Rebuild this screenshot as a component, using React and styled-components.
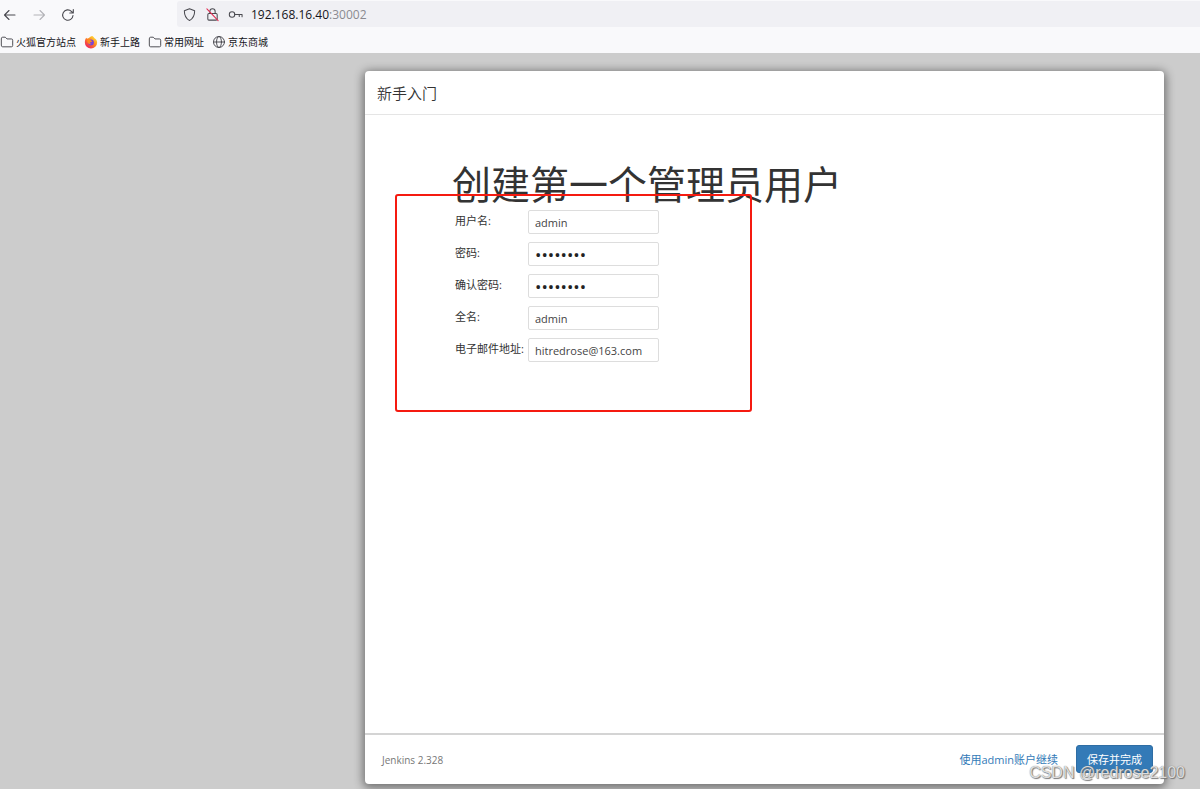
import React from 'react';
import styled, { createGlobalStyle } from 'styled-components';

const Global = createGlobalStyle`
  * { box-sizing: border-box; }
  body {
    margin: 0;
    background: #ccc;
    color: #333;
    font-family: "Open Sans", "Noto Sans CJK SC", sans-serif;
    font-size: 11px;
  }
  button, input { font-family: inherit; }
`;

const Page = styled.div`
  min-height: 100vh;
  display: flex;
  flex-direction: column;
  position: relative;
  overflow: hidden;
`;

const Browser = styled.header`
  background: #f9f9fb;
  height: 53px;
  color: #15141a;
`;

const Toolbar = styled.div`
  display: flex;
  align-items: center;
  height: 30px;
  padding-left: 2px;
`;

const NavButton = styled.button`
  display: flex;
  border: 0;
  padding: 0;
  margin-right: 13px;
  background: none;
  color: ${(p) => (p.disabled ? '#b4b4b8' : '#4a4a50')};
`;

const AddressBar = styled.div`
  display: flex;
  align-items: center;
  flex: 1;
  gap: 8px;
  height: 26px;
  margin: 0 0 2px 88px;
  padding-left: 5px;
  border-radius: 3px 0 0 3px;
  background: #f0f0f4;
  color: #4a4a50;
`;

const Address = styled.span`
  font-size: 12px;
  line-height: 16px;
  padding-top: 1px;
  color: #15141a;
  span { color: #8a8a90; }
`;

const Bookmarks = styled.nav`
  display: flex;
  align-items: center;
  gap: 8px;
  height: 23px;
`;

const Bookmark = styled.a`
  display: flex;
  align-items: center;
  gap: 2px;
  color: #15141a;
  font-size: 10px;
  line-height: 14px;
  text-decoration: none;
  white-space: nowrap;
  svg { color: #4a4a50; }
`;

const Stage = styled.main`
  flex: 1;
  display: flex;
  padding: 18px 36px 5px 365px;
`;

const Modal = styled.section`
  flex: 1;
  display: flex;
  flex-direction: column;
  min-width: 0;
  border-radius: 4px;
  background: #fff;
  box-shadow: 0 2px 10px 2px rgba(0, 0, 0, 0.45);
`;

const ModalHeader = styled.div`
  height: 44px;
  padding: 0 12px;
  border-bottom: 1px solid #e5e5e5;
  font-size: 15px;
  font-weight: 350;
  line-height: 44px;
`;

const ModalBody = styled.div`
  flex: 1;
  padding: 43px 87px;
`;

const Title = styled.h1`
  margin: 0;
  color: #333;
  font-size: 39px;
  font-weight: 400;
  line-height: 52px;
  white-space: nowrap;
`;

const Form = styled.form`
  position: relative;
  width: fit-content;
  padding-left: 3px;
`;

const Highlight = styled.div`
  position: absolute;
  left: -57px;
  top: -16px;
  width: 357px;
  height: 218px;
  border: 2px solid #f51a10;
  border-radius: 3px;
  pointer-events: none;
`;

const Field = styled.div`
  display: grid;
  grid-template-columns: 73px 131px;
  height: 24px;
  margin-bottom: 8px;
`;

const Label = styled.label`
  font-size: 11px;
  line-height: 22px;
  font-weight: 400;
  white-space: nowrap;
`;

const Input = styled.input`
  width: 100%;
  height: 24px;
  border: 1px solid #ddd;
  border-radius: 2px;
  padding: 0 6px;
  background: #fff;
  color: ${(p) => (p.type === 'password' ? '#222' : '#444')};
  font-size: ${(p) => (p.type === 'password' ? '17px' : '11px')};
  outline: 0;
`;

const ModalFooter = styled.footer`
  display: flex;
  align-items: center;
  height: 51px;
  padding: 0 11px 2px 17px;
  border-top: 2px solid #d4d4d4;
`;

const Version = styled.span`
  flex: 1;
  padding-top: 3px;
  color: #777;
  font-size: 10px;
`;

const LinkButton = styled.button`
  border: 0;
  padding: 0;
  margin-right: 18px;
  background: none;
  color: #337ab7;
  font-size: 11px;
`;

const PrimaryButton = styled.button`
  height: 28px;
  border: 1px solid #2e6da4;
  border-radius: 3px;
  padding: 0 10px;
  background: #337ab7;
  color: #fff;
  font-size: 11px;
`;

const Watermark = styled.div`
  position: absolute;
  right: 15px;
  bottom: 6px;
  color: rgba(255, 255, 255, 0.75);
  font-family: "Liberation Sans", sans-serif;
  font-size: 16px;
  line-height: 20px;
  text-shadow: 1px 1px 1px #777, 0 0 1px #666;
  pointer-events: none;
`;

const Icon = ({ size = 14, children }) => (
  <svg width={size} height={size} viewBox="0 0 16 16" fill="none" stroke="currentColor"
    strokeWidth="1.1" strokeLinecap="round" strokeLinejoin="round" aria-hidden="true">
    {children}
  </svg>
);

const BackIcon = () => <Icon size={16}><path d="M13 8H2.500M7 3.500 2.500 8 7 12.500" /></Icon>;
const ForwardIcon = () => <Icon size={16}><path d="M3 8h10.500M9 3.500 13.500 8 9 12.500" /></Icon>;
const ReloadIcon = () => (
  <Icon size={16}><path d="M13 8.500a5.200 5.200 0 1 1-1.600-4.200L13 5.800M13.300 2.500v3.500H9.800" /></Icon>
);
const ShieldIcon = () => (
  <Icon size={15}><path d="M8 1.800 13.500 4c0 5-1.800 8.500-5.500 10.400C4.300 12.500 2.500 9 2.500 4z" /></Icon>
);
const LockIcon = () => (
  <Icon size={15}>
    <rect x="3" y="7" width="10" height="7" rx="1.200" />
    <path d="M5.200 7V4.600a2.800 2.800 0 0 1 5.600 0V7" />
    <path d="M2 2l12 12.500" stroke="#e22850" />
  </Icon>
);
const KeyIcon = () => (
  <Icon size={15}>
    <circle cx="4.300" cy="8" r="2.900" />
    <path d="M7.200 8H15v2.500M12 8v2" />
  </Icon>
);
const FolderIcon = () => (
  <Icon size={14}><path d="M1.500 4a1.500 1.500 0 0 1 1.500-1.500h3L8 4.500h5A1.500 1.500 0 0 1 14.500 6v6a1.500 1.500 0 0 1-1.500 1.500H3A1.500 1.500 0 0 1 1.500 12z" /></Icon>
);
const GlobeIcon = () => (
  <Icon size={14}>
    <circle cx="8" cy="8" r="6.300" />
    <ellipse cx="8" cy="8" rx="2.800" ry="6.300" />
    <path d="M2 8h12" />
  </Icon>
);
const FirefoxIcon = () => (
  <svg width="14" height="14" viewBox="0 0 16 16" aria-hidden="true">
    <defs>
      <linearGradient id="flame" x1="0.850" y1="0.100" x2="0.200" y2="0.900">
        <stop offset="0" stopColor="#ffdf3a" />
        <stop offset="0.450" stopColor="#ff8a1e" />
        <stop offset="1" stopColor="#f0245c" />
      </linearGradient>
    </defs>
    <path d="M2.500 3.200 3.500 4.300C4.300 3.500 5 3.300 5.800 3.300 6.500 2.300 8 1.200 9.500 1c1 .8 2 1.600 2.500 2.600 2 .900 3 2.700 3 4.900A7 7 0 0 1 1 8.500C1 6.300 1.500 4.500 2.500 3.200z" fill="url(#flame)" />
    <circle cx="8" cy="8.500" r="3.300" fill="#7a42d8" />
    <path d="M3.500 5.500c1.500-.8 3-.6 4.500.7L9.500 7c-.7 1-2 .7-2.700 1.400-.500 1 .6 1.800 2 1.400-1.800 1.800-5.300.6-5.300-4.300z" fill="#ff8a1e" />
  </svg>
);

const bookmarks = [
  { text: '火狐官方站点', icon: <FolderIcon /> },
  { text: '新手上路', icon: <FirefoxIcon /> },
  { text: '常用网址', icon: <FolderIcon /> },
  { text: '京东商城', icon: <GlobeIcon /> },
];

const fields = [
  { id: 'username', label: '用户名:', type: 'text', value: 'admin' },
  { id: 'password1', label: '密码:', type: 'password', value: 'password' },
  { id: 'password2', label: '确认密码:', type: 'password', value: 'password' },
  { id: 'fullname', label: '全名:', type: 'text', value: 'admin' },
  { id: 'email', label: '电子邮件地址:', type: 'text', value: 'hitredrose@163.com' },
];

export default function App() {
  return (
    <Page>
      <Global />
      <Browser>
        <Toolbar>
          <NavButton aria-label="后退"><BackIcon /></NavButton>
          <NavButton aria-label="前进" disabled><ForwardIcon /></NavButton>
          <NavButton aria-label="刷新"><ReloadIcon /></NavButton>
          <AddressBar>
            <ShieldIcon />
            <LockIcon />
            <KeyIcon />
            <Address>192.168.16.40<span>:30002</span></Address>
          </AddressBar>
        </Toolbar>
        <Bookmarks>
          {bookmarks.map((b) => (
            <Bookmark key={b.text} href="#">{b.icon}{b.text}</Bookmark>
          ))}
        </Bookmarks>
      </Browser>
      <Stage>
        <Modal>
          <ModalHeader>新手入门</ModalHeader>
          <ModalBody>
            <Title>创建第一个管理员用户</Title>
            <Form>
              {fields.map((f) => (
                <Field key={f.id}>
                  <Label htmlFor={f.id}>{f.label}</Label>
                  <Input id={f.id} type={f.type} defaultValue={f.value} />
                </Field>
              ))}
              <Highlight />
            </Form>
          </ModalBody>
          <ModalFooter>
            <Version>Jenkins 2.328</Version>
            <LinkButton>使用admin账户继续</LinkButton>
            <PrimaryButton>保存并完成</PrimaryButton>
          </ModalFooter>
        </Modal>
      </Stage>
      <Watermark>CSDN @redrose2100</Watermark>
    </Page>
  );
}
